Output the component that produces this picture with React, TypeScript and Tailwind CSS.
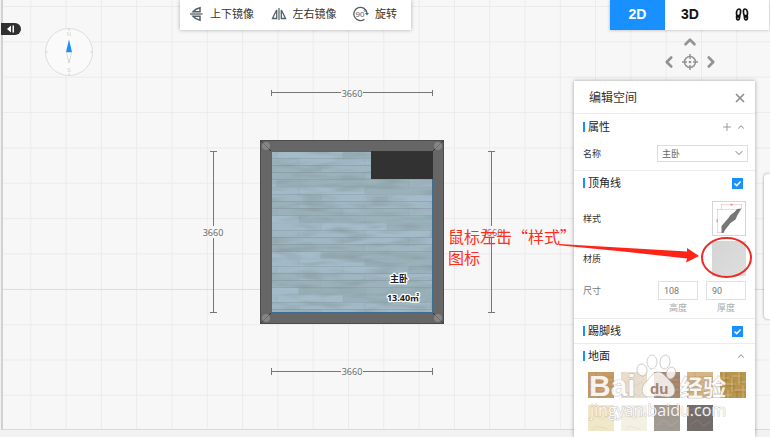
import type { ReactNode } from "react";
import { ChevronDown, ChevronLeft, ChevronRight, ChevronUp, Plus, X } from "lucide-react";

const PLANK_SHADES = ["#9fb7c3", "#9ab1bb", "#a2bac7", "#9bb2bb", "#a4bcca"];
const PLANK_OFFSETS = [6, 28, 50, 28];

const SWATCHES = [
  { name: "oak", fill: "#c79a63", kind: "plank" },
  { name: "cream marble", fill: "#e8dccb", kind: "stone" },
  { name: "walnut", fill: "#a98670", kind: "plank" },
  { name: "light oak", fill: "#d6b483", kind: "plank" },
  { name: "parquet", fill: "#b8944e", kind: "weave" },
  { name: "beige tile", fill: "#f0e7c8", kind: "stone" },
  { name: "ivory tile", fill: "#f3f0e4", kind: "stone" },
  { name: "grey stone", fill: "#a09a92", kind: "stone" },
  { name: "dark stone", fill: "#716b69", kind: "stone" },
];

const CanvasGrid = () => (
  <svg className="absolute inset-0 h-full w-full" aria-hidden="true">
    <defs>
      <pattern id="grid" x="-8" y="6" width="35.3" height="35.35" patternUnits="userSpaceOnUse">
        <path d="M0 .5H36M.5 0V36" stroke="#ebebeb" fill="none" />
      </pattern>
    </defs>
    <rect width="100%" height="100%" fill="url(#grid)" />
    <path d="M0 289.5H2000" stroke="#dfdfdf" />
  </svg>
);

const Planks = () => {
  const planks: ReactNode[] = [];
  for (let row = 0; row < 23; row++) {
    for (let col = -2; col < 4; col++) {
      planks.push(
        <rect
          key={`${row}-${col}`}
          x={71 + col * 66 + PLANK_OFFSETS[row % 4]}
          y={67 + row * 7.2}
          width="66"
          height="7.2"
          fill={PLANK_SHADES[(row * 3 + (col + 2) * 2) % 5]}
          stroke="#8da4ae"
          strokeWidth=".2"
        />
      );
    }
  }
  return (
    <g clipPath="url(#room)">
      {planks}
      <rect x="71" y="67" width="162" height="162" filter="url(#grain)" />
    </g>
  );
};

const FloorPlan = () => (
  <svg className="absolute left-[200px] top-[84px]" width="310" height="300" role="img" aria-label="主卧 3660 × 3660">
    <defs>
      <clipPath id="room">
        <rect x="71" y="67" width="162" height="162" />
      </clipPath>
      {/* wood grain: noise stretched along the planks */}
      <filter id="grain" x="0" y="0" width="1" height="1" colorInterpolationFilters="sRGB">
        <feTurbulence type="fractalNoise" baseFrequency=".03 .16" numOctaves="2" seed="4" />
        <feColorMatrix values="0 0 0 0 .5  0 0 0 0 .57  0 0 0 0 .57  1.1 0 0 0 -.45" />
      </filter>
    </defs>

    <g stroke="#777" fill="none">
      <path d="M71.5 8.5H141M163 8.5H232.5M71.5 6V12M232.5 6V12" />
      <path d="M71.5 287.5H141M163 287.5H232.5M71.5 284V291M232.5 284V291" />
      <path d="M13.5 67.5V142M13.5 154V228.5M10 67.5H17M10 228.5H17" />
      <path d="M291.5 67.5V142M291.5 154V228.5M288 67.5H295M288 228.5H295" />
    </g>
    <g fill="#666" fontSize="9" textAnchor="middle" className="font-['Open_Sans',sans-serif]">
      <text x="152" y="13">3660</text>
      <text x="152" y="291">3660</text>
      <text x="13" y="152">3660</text>
      <text x="292" y="152">3660</text>
    </g>

    <rect x="60.5" y="56.5" width="183" height="183" fill="#666" stroke="#4b4b4b" />
    <path d="M61 57L71 67M243 57L233 67M61 239L71 229M243 239L233 229" stroke="#333" />
    <g fill="#999" opacity=".6">
      <circle cx="66" cy="62" r="4" />
      <circle cx="238" cy="62" r="4" />
      <circle cx="66" cy="234" r="4" />
      <circle cx="238" cy="234" r="4" />
    </g>
    <Planks />
    <rect x="71.5" y="67.5" width="161" height="161" fill="none" stroke="#3f6c91" />
    <rect x="171" y="67" width="62" height="28" fill="#323232" />

    <g
      fill="#222"
      stroke="#fff"
      strokeWidth="2.5"
      strokeLinejoin="round"
      paintOrder="stroke"
      textAnchor="middle"
      fontSize="9"
      className="font-['Open_Sans','Noto_Sans_CJK_SC',sans-serif] font-bold"
    >
      <text x="199" y="198">主卧</text>
      <text x="203" y="217">13.40㎡</text>
    </g>
  </svg>
);

const FlipVerticalIcon = () => (
  <svg width="14" height="16" viewBox="0 0 14 16" fill="none" stroke="#536068" strokeWidth="1.5">
    <path d="M10 1.800V5.800H3Q5.500 2.800 10 1.800ZM10 14.200V10.200H3Q5.500 13.200 10 14.200Z" />
    <path d="M0 8H12.500" strokeWidth="1.300" />
  </svg>
);

const FlipHorizontalIcon = () => (
  <svg width="16" height="14" viewBox="0 0 16 14" fill="none" stroke="#536068" strokeWidth="1.3">
    <path d="M1.500 11.500H5.700V3Q3.500 7 1.500 11.500ZM14.500 11.500H10.300V3Q12.500 7 14.500 11.500Z" />
    <path d="M8 1V13" strokeWidth="1.2" />
  </svg>
);

const RotateIcon = () => (
  <svg width="16" height="16" viewBox="0 0 16 16" fill="none" stroke="#536068" strokeWidth="1.300">
    <path d="M11.500 13.200A6.600 6.600 0 1 1 14 7" />
    <path d="M12 7H16L14 9.500Z" fill="#536068" stroke="none" />
    <text x="7" y="10.500" fontSize="8" textAnchor="middle" fill="#536068" stroke="none" className="font-['Liberation_Sans',sans-serif]">
      90
    </text>
    <circle cx="11.900" cy="4.600" r=".9" strokeWidth=".6" />
  </svg>
);

const Toolbar = () => (
  <div className="flex h-[30px] w-[231px] items-center justify-between bg-white pb-[2px] pl-[10px] pr-[14px] text-[11px] leading-4 text-[#333] shadow-[0_0_4px_rgba(0,0,0,0.3)]">
    <button className="flex items-center gap-[6px]">
      <FlipVerticalIcon />
      上下镜像
    </button>
    <button className="flex items-center gap-[6px]">
      <FlipHorizontalIcon />
      左右镜像
    </button>
    <button className="flex items-center gap-[6px]">
      <RotateIcon />
      旋转
    </button>
  </div>
);

const Compass = () => (
  <svg width="50" height="50" viewBox="0 0 50 50" aria-label="compass">
    <circle cx="25" cy="25" r="23.500" fill="#fafafa" stroke="#dedede" />
    <path d="M25 1V4M25 46V49M1 25H4M46 25H49" stroke="#d8d8d8" />
    <path d="M25 12.500L28 25H22Z" fill="#1890ff" />
    <path d="M22.500 25.500H27.500L25 36Z" fill="#fff" stroke="#bfc8c8" strokeWidth=".7" />
    <g fill="#d2d2d2" fontSize="6" textAnchor="middle" className="font-['Liberation_Sans',sans-serif]">
      <text x="25" y="9">N</text>
      <text x="25" y="45">S</text>
    </g>
  </svg>
);

const FootprintsIcon = () => (
  <svg width="14" height="13" viewBox="0 0 14 13" fill="none" stroke="#111" strokeWidth="1.700">
    <path d="M3.800 1C5.800 .8 5.800 3 5.300 5.500L4.800 7.500H1.800C1.200 5 1.500 1.300 3.800 1ZM1.600 9H4.600C4.500 11 4.100 12 3 12S1.600 11 1.600 9Z" />
    <path d="M10.200 1C8.200 .8 8.200 3 8.700 5.500L9.200 7.500H12.200C12.800 5 12.500 1.300 10.200 1ZM12.400 9H9.400C9.500 11 9.900 12 11 12S12.400 11 12.400 9Z" />
  </svg>
);

const ViewSwitch = () => (
  <div className="flex h-[30px] w-[159px] bg-white font-['Liberation_Sans',sans-serif] text-sm font-bold text-[#111] shadow-[0_0_3px_rgba(0,0,0,0.3)]">
    <button className="w-[55px] bg-[#1890ff] pb-[2px] text-white">2D</button>
    <button className="w-[50px] pb-[2px]">3D</button>
    <button className="flex flex-1 items-center justify-center pb-[2px]" aria-label="walk">
      <FootprintsIcon />
    </button>
  </div>
);

const PanControl = () => (
  <div className="mr-[49px] mt-[3px] flex flex-col items-center text-[#939393]">
    <button aria-label="up">
      <ChevronUp size={18} strokeWidth={3.5} />
    </button>
    <div className="mt-[2px] flex items-center gap-1">
      <button aria-label="left">
        <ChevronLeft size={18} strokeWidth={3.5} />
      </button>
      <button aria-label="center">
        <svg width="16" height="16" viewBox="0 0 16 16" fill="none" stroke="currentColor" strokeWidth="1.500">
          <circle cx="8" cy="8" r="5.500" />
          <path d="M8 0V5M8 11V16M0 8H5M11 8H16" />
          <circle cx="8" cy="8" r="1.300" fill="currentColor" stroke="none" />
        </svg>
      </button>
      <button aria-label="right">
        <ChevronRight size={18} strokeWidth={3.5} />
      </button>
    </div>
  </div>
);

const SectionTitle = ({ children }: { children: ReactNode }) => (
  <h3 className="flex items-center gap-[3px] text-[11px] leading-4 text-[#222]">
    <span className="h-[10px] w-[2px] bg-[#1890ff]" />
    {children}
  </h3>
);

const CheckSection = ({ id, title }: { id: string; title: string }) => (
  <div className="flex h-6 items-center justify-between pr-3">
    <label htmlFor={id}>
      <SectionTitle>{title}</SectionTitle>
    </label>
    <span className="relative flex">
      <input
        id={id}
        type="checkbox"
        defaultChecked
        className="peer size-[11px] appearance-none border border-[#1890ff] bg-white checked:bg-[#1890ff]"
      />
      <svg viewBox="0 0 11 11" className="pointer-events-none absolute inset-0 hidden peer-checked:block" fill="none" stroke="#fff" strokeWidth="1.500">
        <path d="M2.500 5.500L4.700 7.600L8.600 3.500" />
      </svg>
    </span>
  </div>
);

const SizeField = ({ id, label, value }: { id: string; label: string; value: string }) => (
  <div className="flex w-10 flex-col items-center">
    <input
      id={id}
      defaultValue={value}
      className="h-[19px] w-full border border-[#e0e0e0] pl-[5px] font-[Roboto,sans-serif] text-[9px] text-[#777] outline-none"
    />
    <label htmlFor={id} className="mt-[1px] leading-[14px] text-[#aaa]">
      {label}
    </label>
  </div>
);

const MouldingIcon = () => (
  <svg width="32" height="33" viewBox="0 0 32 33" fill="none">
    <path d="M8 2.500H29M8.500 2V8M28.500 2V7M4 7.500H28M4.500 7V30M4 30.500H9" stroke="#f3b9b9" strokeWidth=".6" />
    <path d="M28.500 6.500L24 7L22 9.500L17.500 13L15 16.500L8.500 24V31H10.500L12 28L17.500 21L22.500 17.500L24.500 13Z" fill="#777" />
    <path d="M17.500 1.800H19.500V3.500H17.500ZM3.500 17.500H5V20H3.500Z" fill="#e98d8d" />
  </svg>
);

const Swatch = ({ name, fill, kind }: (typeof SWATCHES)[number]) => (
  <button aria-label={name} className="size-[26px]">
    <svg width="26" height="26" viewBox="0 0 26 26" fill="none">
      <rect width="26" height="26" fill={fill} />
      {kind === "plank" && (
        <>
          <path d="M0 5H26M0 10H26M0 15H26M0 20H26M8 0V5M18 5V10M5 10V15M20 15V20M11 20V26" stroke="#70451f" opacity=".14" />
          <path d="M2 3H14M12 8H24M3 13H15M11 18H25M3 23H10" stroke="#fff" opacity=".13" />
        </>
      )}
      {kind === "weave" && (
        <>
          <path d="M0 6H9M5 12H16M12 4H22M14 18H26M2 23H12M19 10H26M4 0V12M12 6V20M19 0V13M23 13V26M8 18V26" stroke="#ddc287" opacity=".65" />
          <path d="M1 8H9M6 14H15M14 20H25M6 1V11M14 7V18M21 1V12M17 19V26" stroke="#84601e" opacity=".35" />
        </>
      )}
      {kind === "stone" && (
        <>
          <path d="M1 6L8 3L15 8L25 5M3 20L10 15L17 21L24 16M13 0L11 8" stroke="#fff" opacity=".12" />
          <path d="M1 13L7 10L13 14L22 10M4 25L9 21L19 24M18 2L22 5" stroke="#8a7a5a" opacity=".1" />
        </>
      )}
    </svg>
  </button>
);

const EditPanel = () => (
  <aside className="w-[181px] flex-1 bg-white text-[9px] text-[#333] shadow-[0_0_4px_rgba(0,0,0,0.35)]">
    <header className="flex h-[33px] items-center justify-between border-b border-[#ececec] pl-[15px] pr-2 pt-[2px] text-[#333]">
      <h2 className="text-xs leading-4">编辑空间</h2>
      <button aria-label="关闭">
        <X size={14} strokeWidth={3} className="text-[#909090]" />
      </button>
    </header>

    <section className="border-b border-[#ececec] pl-[9px]">
      <div className="flex h-[26px] items-center justify-between pr-[9px]">
        <SectionTitle>属性</SectionTitle>
        <div className="flex items-center gap-[3px] text-[#999]">
          <button aria-label="添加">
            <Plus size={12} strokeWidth={2} />
          </button>
          <button aria-label="收起">
            <ChevronUp size={10} strokeWidth={2.5} />
          </button>
        </div>
      </div>
      <div className="flex h-[30px] items-start justify-between pr-[7px] pt-[5px]">
        <label htmlFor="room-name" className="leading-[17px]">
          名称
        </label>
        <span className="relative flex">
          <select id="room-name" className="h-[17px] w-[91px] appearance-none border border-[#dedede] bg-white pl-1 text-[9px] leading-[15px] text-[#666]">
            <option>主卧</option>
          </select>
          <ChevronDown size={12} className="pointer-events-none absolute right-[3px] top-[2px] text-[#777]" />
        </span>
      </div>
    </section>

    <section className="border-b border-[#ececec] pl-[9px]">
      <CheckSection id="cornice" title="顶角线" />
      <div className="flex flex-col gap-[5px] pb-[3px] pr-[9px] pt-[6px]">
        <div className="flex items-center justify-between">
          <span>样式</span>
          <button aria-label="样式" className="h-[35px] w-[34px] border border-[#d5d5d5]">
            <MouldingIcon />
          </button>
        </div>
        <div className="flex items-center justify-between">
          <span>材质</span>
          <button aria-label="材质" className="h-[35px] w-[34px] bg-linear-to-br from-[#d4d4d4] to-[#dedede]" />
        </div>
        <div className="flex gap-2 text-[#777]">
          <span className="flex-1 leading-[19px]">尺寸</span>
          <SizeField id="height" label="高度" value="108" />
          <SizeField id="thickness" label="厚度" value="90" />
        </div>
      </div>
    </section>

    <section className="border-b border-[#ececec] pl-[9px]">
      <CheckSection id="skirting" title="踢脚线" />
    </section>

    <section className="pl-[9px]">
      <div className="flex h-6 items-center justify-between pr-[9px]">
        <SectionTitle>地面</SectionTitle>
        <button aria-label="收起地面" className="text-[#999]">
          <ChevronUp size={10} strokeWidth={2.5} />
        </button>
      </div>
      <div className="flex flex-wrap gap-[7px] pl-[5px] pt-1">
        {SWATCHES.map((swatch) => (
          <Swatch key={swatch.name} {...swatch} />
        ))}
      </div>
    </section>
  </aside>
);

const Watermark = () => (
  <svg className="pointer-events-none absolute right-6 top-[350px]" width="160" height="72" viewBox="0 0 160 72">
    <g fill="#fff" fillOpacity=".8" stroke="#aaa" strokeOpacity=".7" strokeWidth=".8">
      <ellipse cx="56" cy="20" rx="5" ry="6" transform="rotate(-15 56 20)" />
      <ellipse cx="66" cy="12" rx="5" ry="7" />
      <ellipse cx="79" cy="12" rx="5" ry="7" transform="rotate(10 79 12)" />
      <ellipse cx="85" cy="23" rx="4.500" ry="6" transform="rotate(15 85 23)" />
      <path d="M72 22C67 22 65 27 60 32C54 37 55 47 63 47C68 47 69 46 72 46S77 47 82 47C90 47 91 38 85 32C80 27 77 22 72 22Z" />
    </g>
    <g fill="#fff" fillOpacity=".88" stroke="#999" strokeOpacity=".5" strokeWidth="1.200" paintOrder="stroke" className="font-['Liberation_Sans','Noto_Sans_CJK_SC',sans-serif] font-bold">
      <text x="3" y="46" fontSize="30">Bai</text>
      <text x="94" y="46" fontSize="23">经验</text>
    </g>
    <text x="64" y="44" fontSize="15" fill="#a08371" className="font-['Liberation_Sans',sans-serif] font-bold">
      du
    </text>
    <text x="4" y="66" fontSize="16" fill="#fff" fillOpacity=".9" stroke="#999" strokeOpacity=".45" strokeWidth="1.200" paintOrder="stroke" className="font-['Open_Sans',sans-serif]">
      jingyan.baidu.com
    </text>
  </svg>
);

const Callout = () => (
  <div className="pointer-events-none absolute right-0 top-[226px] w-[322px] font-['Noto_Sans_CJK_SC',sans-serif] text-base leading-[21px] text-[#ff2d20]">
    <p>
      鼠标左击“样式”
      <br />
      图标
    </p>
    <svg className="absolute left-[110px] top-0" width="200" height="54" viewBox="0 0 200 54">
      <path d="M1 18L129 25.500L129 22L141 30L128 36.500L129 32.500L70 26L1 19.200Z" fill="#ff2418" />
      <ellipse cx="168.500" cy="31.500" rx="24.500" ry="19.500" fill="none" stroke="#ee2b24" strokeWidth="2" />
    </svg>
  </div>
);

export default function App() {
  return (
    <div
      lang="zh-CN"
      className="relative flex h-screen flex-col overflow-hidden bg-[#f2f2f2] font-['Open_Sans','Noto_Sans_CJK_SC',sans-serif]"
    >
      <main className="relative ml-[1px] flex-1 border-b border-l-2 border-b-[#d9d9d9] border-l-[#d2d2d2] bg-[#f7f7f7]">
        <CanvasGrid />
      </main>
      <footer className="h-[7px]" />

      <FloorPlan />

      <div className="absolute inset-0 flex items-start justify-between">
        <div className="flex w-[180px] items-start gap-[23px] pl-[1px]">
          <button aria-label="展开" className="mt-[23px] flex h-3 w-5 items-center justify-center rounded-r-full bg-[#303030]">
            <svg width="8" height="8" viewBox="0 0 8 8" fill="#fff">
              <path d="M0 4L4 .5V7.500ZM5.500 .5H7V7.500H5.500Z" />
            </svg>
          </button>
          <div className="pt-[27px]">
            <Compass />
          </div>
        </div>
        <Toolbar />
        <div className="flex h-full flex-1 flex-col items-end pr-[1px]">
          <ViewSwitch />
          <PanControl />
          <div className="mr-[14px] mt-[10px] flex flex-1">
            <EditPanel />
          </div>
        </div>
      </div>

      <div className="absolute right-0 top-[174px] h-[145px] w-[6px] rounded-l bg-white shadow-[0_0_3px_rgba(0,0,0,0.4)]" />
      <Watermark />
      <Callout />
    </div>
  );
}
